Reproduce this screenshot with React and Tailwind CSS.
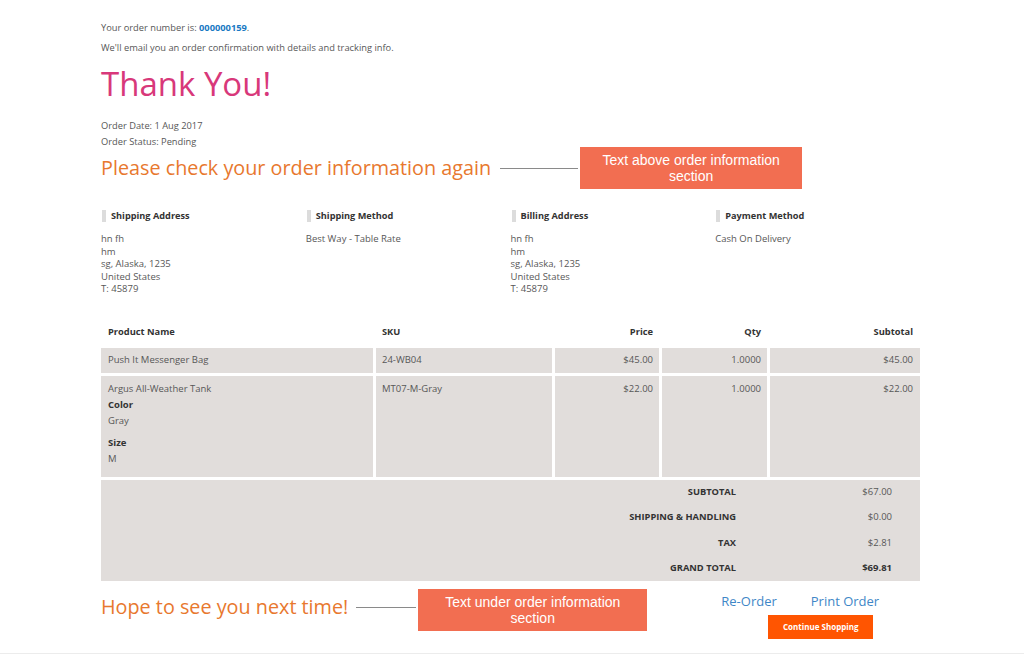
import React from "react";

function InfoCol({ title, lines }) {
  return (
    <div className="w-[205px]">
      <div className="flex items-center h-[14px]">
        <span className="ml-[1px] w-[4px] h-[12px] bg-[#dcdcdc]"></span>
        <span className="ml-[5px] text-[9.2px] font-bold text-[#333]">{title}</span>
      </div>
      <div className="mt-[10px] text-[9.5px] leading-[12.5px] text-[#575757]">
        {lines.map((l, i) => (
          <div key={i}>{l}</div>
        ))}
      </div>
    </div>
  );
}

const cell = "bg-[#e1dddb] text-[9.5px] text-[#575757]";
const head = "h-[25px] flex items-center text-[9.3px] font-bold text-[#333]";

export default function App() {
  return (
    <div
      className="w-[1024px] h-[654px] bg-white border-b border-[#ececec] overflow-hidden"
      style={{ fontFamily: "'Open Sans', sans-serif" }}
    >
      <div className="ml-[101px] w-[819px] pt-[21px]">
        <div className="text-[9.3px] leading-[14px] text-[#575757]">
          Your order number is: <span className="font-bold text-[#1979c3]">000000159</span>.
        </div>
        <div className="mt-[6px] text-[9.3px] leading-[14px] text-[#575757]">
          We'll email you an order confirmation with details and tracking info.
        </div>
        <div className="mt-[9px] text-[33px] leading-[40px] text-[#d8387a]">Thank You!</div>
        <div className="mt-[14px] text-[9.3px] leading-[16px] text-[#575757]">
          <div>Order Date: 1 Aug 2017</div>
          <div>Order Status: Pending</div>
        </div>
        <div className="flex items-center -mt-[3px] h-[42px]">
          <span className="text-[19.8px] leading-[24px] text-[#e8782e]">
            Please check your order information again
          </span>
          <span className="ml-[9px] w-[78px] h-px bg-[#8a8a8a]"></span>
          <span
            className="ml-[2px] w-[222px] h-[42px] bg-[#f26e51] text-white text-[14px] leading-[16px] flex items-center justify-center text-center px-[20px]"
            style={{ fontFamily: "'Liberation Sans', Arial, sans-serif" }}
          >
            Text above order information section
          </span>
        </div>
        <div className="flex mt-[20px]">
          <InfoCol
            title="Shipping Address"
            lines={["hn fh", "hm", "sg, Alaska, 1235", "United States", "T: 45879"]}
          />
          <InfoCol title="Shipping Method" lines={["Best Way - Table Rate"]} />
          <InfoCol
            title="Billing Address"
            lines={["hn fh", "hm", "sg, Alaska, 1235", "United States", "T: 45879"]}
          />
          <InfoCol title="Payment Method" lines={["Cash On Delivery"]} />
        </div>
        <div className="mt-[24px] grid grid-cols-[272px_176px_104px_105px_150px] gap-x-[3px] gap-y-[3px]">
          <div className={`${head} px-[7px]`}>Product Name</div>
          <div className={`${head} px-[6px]`}>SKU</div>
          <div className={`${head} justify-end px-[6px]`}>Price</div>
          <div className={`${head} justify-end px-[6px]`}>Qty</div>
          <div className={`${head} justify-end px-[7px]`}>Subtotal</div>

          <div className={`${cell} h-[25px] flex items-center px-[7px]`}>Push It Messenger Bag</div>
          <div className={`${cell} h-[25px] flex items-center px-[6px]`}>24-WB04</div>
          <div className={`${cell} h-[25px] flex items-center justify-end px-[6px]`}>$45.00</div>
          <div className={`${cell} h-[25px] flex items-center justify-end px-[6px]`}>1.0000</div>
          <div className={`${cell} h-[25px] flex items-center justify-end px-[7px]`}>$45.00</div>

          <div className={`${cell} h-[101px] px-[7px] pt-[6px] leading-[14px]`}>
            <div>Argus All-Weather Tank</div>
            <div className="mt-[2px] font-bold text-[#333]">Color</div>
            <div className="mt-[2px]">Gray</div>
            <div className="mt-[8px] font-bold text-[#333]">Size</div>
            <div className="mt-[2px]">M</div>
          </div>
          <div className={`${cell} h-[101px] px-[6px] pt-[6px] leading-[14px]`}>MT07-M-Gray</div>
          <div className={`${cell} h-[101px] px-[6px] pt-[6px] leading-[14px] text-right`}>$22.00</div>
          <div className={`${cell} h-[101px] px-[6px] pt-[6px] leading-[14px] text-right`}>1.0000</div>
          <div className={`${cell} h-[101px] px-[7px] pt-[6px] leading-[14px] text-right`}>$22.00</div>
        </div>
        <div className="mt-[3px] h-[101px] bg-[#e1dddb] grid grid-cols-[635px_156px] grid-rows-[repeat(4,25.25px)]">
          {[
            ["SUBTOTAL", "$67.00"],
            ["SHIPPING & HANDLING", "$0.00"],
            ["TAX", "$2.81"],
            ["GRAND TOTAL", "$69.81"],
          ].map(([l, v], i) => (
            <React.Fragment key={l}>
              <div className="flex items-center justify-end text-[9.3px] font-bold text-[#333]">{l}</div>
              <div
                className={`flex items-center justify-end text-[9.5px] ${
                  i === 3 ? "font-bold text-[#333]" : "text-[#575757]"
                }`}
              >
                {v}
              </div>
            </React.Fragment>
          ))}
        </div>
        <div className="flex mt-[8px]">
          <div className="flex items-center h-[42px]">
            <div className="flex items-center mb-[6px]">
              <span className="text-[19.8px] leading-[24px] text-[#e8782e]">Hope to see you next time!</span>
              <span className="ml-[8px] w-[60px] h-px bg-[#8a8a8a] mt-[2px]"></span>
            </div>
            <span
              className="ml-[2px] w-[229px] h-[42px] bg-[#f26e51] text-white text-[14px] leading-[16px] flex items-center justify-center text-center px-[24px]"
              style={{ fontFamily: "'Liberation Sans', Arial, sans-serif" }}
            >
              Text under order information section
            </span>
          </div>
          <div className="ml-[74px] pt-[4px] flex flex-col">
            <div className="flex text-[13px] leading-[16px] text-[#3f87c7]">
              <span>Re-Order</span>
              <span className="ml-[34px]">Print Order</span>
            </div>
            <div className="mt-[6px] ml-[47px] w-[105px] h-[24px] bg-[#ff5501] text-white text-[8px] font-bold flex items-center justify-center">
              Continue Shopping
            </div>
          </div>
        </div>
      </div>
    </div>
  );
}
